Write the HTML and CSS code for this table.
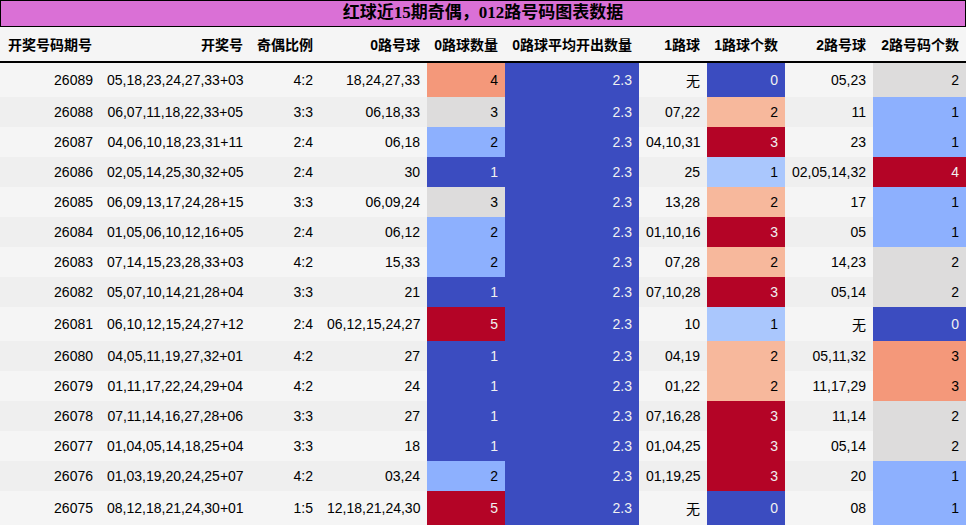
FILE: index.html
```html
<!DOCTYPE html>
<html lang="zh">
<head>
<meta charset="utf-8">
<title>红球近15期奇偶，012路号码图表数据</title>
<link rel="stylesheet" href="styles.css">
</head>
<body>
<div class="title">红球近15期奇偶，012路号码图表数据</div>
<table class="data">
  <colgroup>
    <col class="c1"><col class="c2"><col class="c3"><col class="c4"><col class="c5">
    <col class="c6"><col class="c7"><col class="c8"><col class="c9"><col class="c10">
  </colgroup>
  <thead>
    <tr>
      <th class="first">开奖号码期号</th><th>开奖号</th><th>奇偶比例</th><th>0路号球</th><th>0路球数量</th>
      <th>0路球平均开出数量</th><th>1路球</th><th>1路球个数</th><th>2路号球</th><th>2路号码个数</th>
    </tr>
  </thead>
  <tbody>
    <tr><td>26089</td><td>05,18,23,24,27,33+03</td><td>4:2</td><td>18,24,27,33</td><td class="g4">4</td><td class="g1">2.3</td><td>无</td><td class="g1">0</td><td>05,23</td><td class="g3">2</td></tr>
    <tr><td>26088</td><td>06,07,11,18,22,33+05</td><td>3:3</td><td>06,18,33</td><td class="g3">3</td><td class="g1">2.3</td><td>07,22</td><td class="g6">2</td><td>11</td><td class="g2">1</td></tr>
    <tr><td>26087</td><td>04,06,10,18,23,31+11</td><td>2:4</td><td>06,18</td><td class="g2">2</td><td class="g1">2.3</td><td>04,10,31</td><td class="g5">3</td><td>23</td><td class="g2">1</td></tr>
    <tr><td>26086</td><td>02,05,14,25,30,32+05</td><td>2:4</td><td>30</td><td class="g1">1</td><td class="g1">2.3</td><td>25</td><td class="g7">1</td><td>02,05,14,32</td><td class="g5">4</td></tr>
    <tr><td>26085</td><td>06,09,13,17,24,28+15</td><td>3:3</td><td>06,09,24</td><td class="g3">3</td><td class="g1">2.3</td><td>13,28</td><td class="g6">2</td><td>17</td><td class="g2">1</td></tr>
    <tr><td>26084</td><td>01,05,06,10,12,16+05</td><td>2:4</td><td>06,12</td><td class="g2">2</td><td class="g1">2.3</td><td>01,10,16</td><td class="g5">3</td><td>05</td><td class="g2">1</td></tr>
    <tr><td>26083</td><td>07,14,15,23,28,33+03</td><td>4:2</td><td>15,33</td><td class="g2">2</td><td class="g1">2.3</td><td>07,28</td><td class="g6">2</td><td>14,23</td><td class="g3">2</td></tr>
    <tr><td>26082</td><td>05,07,10,14,21,28+04</td><td>3:3</td><td>21</td><td class="g1">1</td><td class="g1">2.3</td><td>07,10,28</td><td class="g5">3</td><td>05,14</td><td class="g3">2</td></tr>
    <tr><td>26081</td><td>06,10,12,15,24,27+12</td><td>2:4</td><td>06,12,15,24,27</td><td class="g5">5</td><td class="g1">2.3</td><td>10</td><td class="g7">1</td><td>无</td><td class="g1">0</td></tr>
    <tr><td>26080</td><td>04,05,11,19,27,32+01</td><td>4:2</td><td>27</td><td class="g1">1</td><td class="g1">2.3</td><td>04,19</td><td class="g6">2</td><td>05,11,32</td><td class="g4">3</td></tr>
    <tr><td>26079</td><td>01,11,17,22,24,29+04</td><td>4:2</td><td>24</td><td class="g1">1</td><td class="g1">2.3</td><td>01,22</td><td class="g6">2</td><td>11,17,29</td><td class="g4">3</td></tr>
    <tr><td>26078</td><td>07,11,14,16,27,28+06</td><td>3:3</td><td>27</td><td class="g1">1</td><td class="g1">2.3</td><td>07,16,28</td><td class="g5">3</td><td>11,14</td><td class="g3">2</td></tr>
    <tr><td>26077</td><td>01,04,05,14,18,25+04</td><td>3:3</td><td>18</td><td class="g1">1</td><td class="g1">2.3</td><td>01,04,25</td><td class="g5">3</td><td>05,14</td><td class="g3">2</td></tr>
    <tr><td>26076</td><td>01,03,19,20,24,25+07</td><td>4:2</td><td>03,24</td><td class="g2">2</td><td class="g1">2.3</td><td>01,19,25</td><td class="g5">3</td><td>20</td><td class="g2">1</td></tr>
    <tr><td>26075</td><td>08,12,18,21,24,30+01</td><td>1:5</td><td>12,18,21,24,30</td><td class="g5">5</td><td class="g1">2.3</td><td>无</td><td class="g1">0</td><td>08</td><td class="g2">1</td></tr>
  </tbody>
</table>
</body>
</html>
```
FILE: styles.css
```css
html, body {
  margin: 0;
  padding: 0;
  background: #ffffff;
}

body {
  width: 966px;
  font-family: "Liberation Sans", "Noto Sans CJK SC", sans-serif;
  font-size: 14px;
  color: #000;
}

.title {
  box-sizing: border-box;
  height: 27px;
  border: 1px solid #000;
  background: #da70d6;
  text-align: center;
  font-family: "Liberation Serif", "Noto Sans CJK SC", serif;
  font-size: 17px;
  font-weight: bold;
  line-height: 24px;
}

.data {
  width: 966px;
  border-collapse: collapse;
  border-spacing: 0;
  table-layout: fixed;
}

.c1 { width: 100px; }
.c2 { width: 150px; }
.c3 { width: 70px; }
.c4 { width: 107px; }
.c5 { width: 78px; }
.c6 { width: 134px; }
.c7 { width: 68px; }
.c8 { width: 78px; }
.c9 { width: 88px; }
.c10 { width: 93px; }

.data th {
  background: #f5f5f5;
  font-weight: bold;
  text-align: right;
  padding: 7px 7px;
  white-space: nowrap;
  border-bottom: 2px solid #000;
}

.data th.first {
  text-align: left;
  padding-left: 8px;
}

.data td {
  text-align: right;
  padding: 7px 7px;
  white-space: nowrap;
  line-height: normal;
  vertical-align: middle;
}

.data tbody tr:nth-child(odd) { background: #f5f5f5; }
.data tbody tr:nth-child(even) { background: #efefef; }

.data td.g1 { background: #3b4cc0; color: #f1f1f1; }
.data td.g2 { background: #8db0fe; color: #000; }
.data td.g3 { background: #dddcdc; color: #000; }
.data td.g4 { background: #f4987a; color: #000; }
.data td.g5 { background: #b40426; color: #f1f1f1; }
.data td.g6 { background: #f7b89c; color: #000; }
.data td.g7 { background: #aac7fd; color: #000; }
```
